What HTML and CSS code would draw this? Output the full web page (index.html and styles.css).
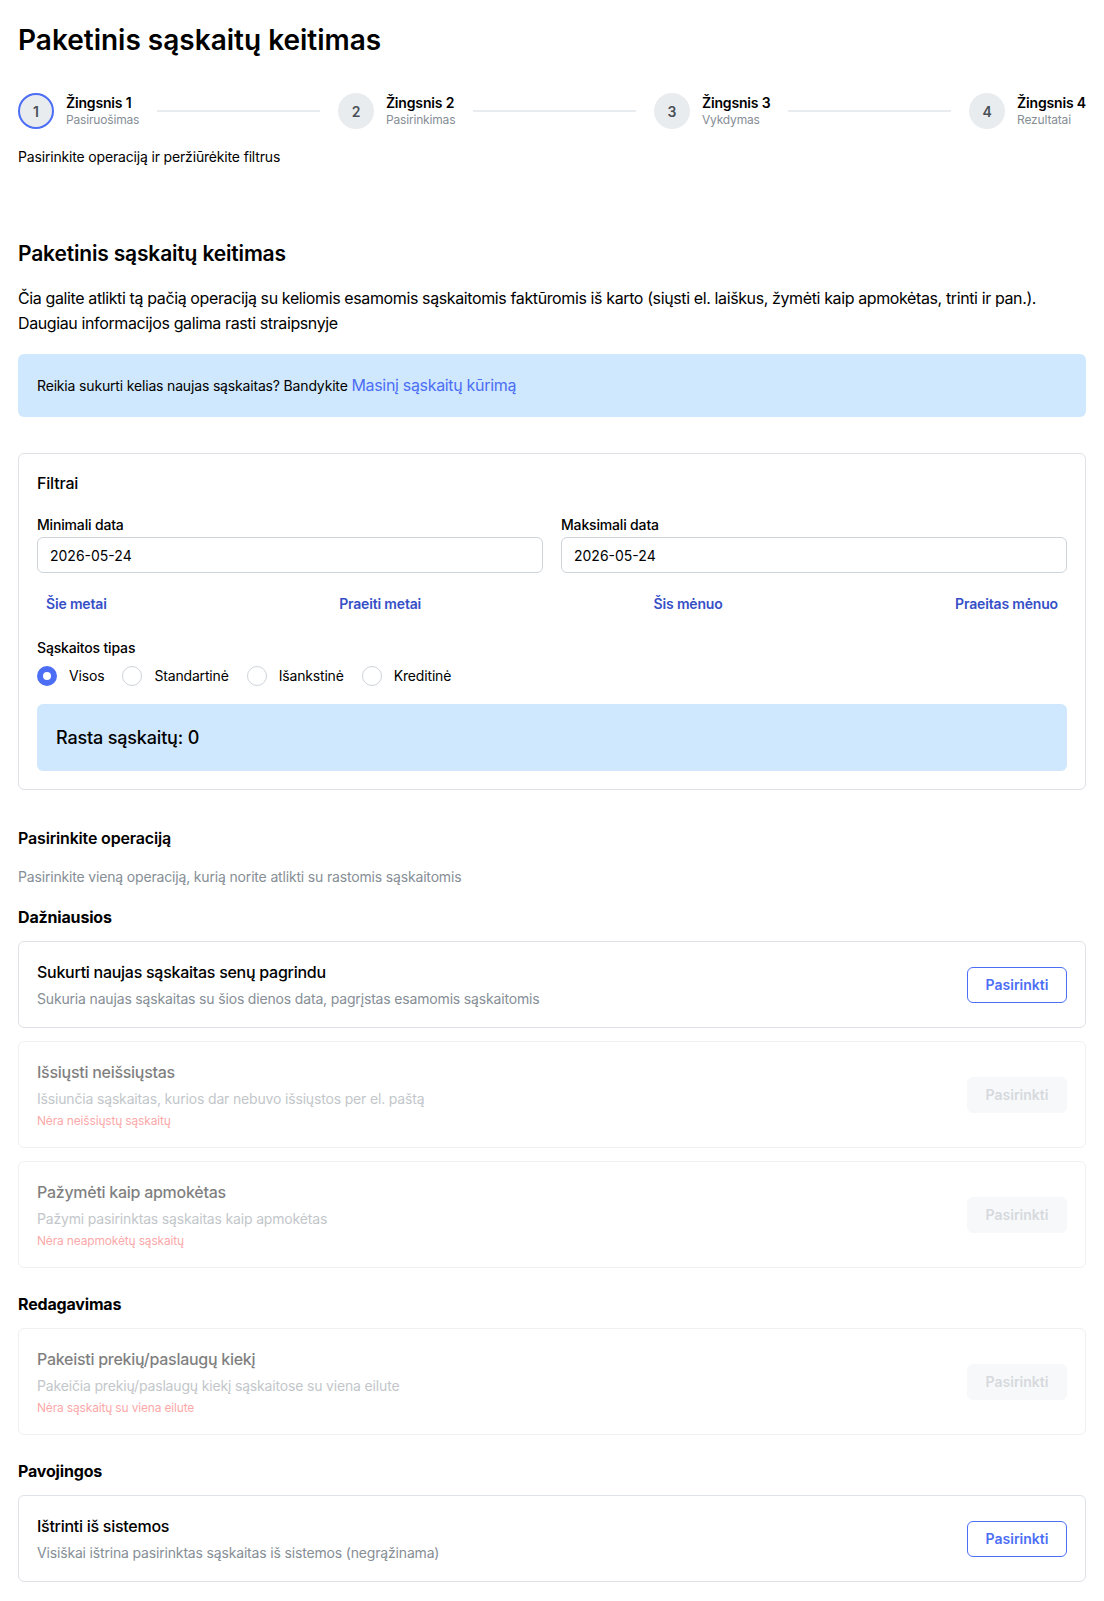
FILE: index.html
```html
<!DOCTYPE html>
<html lang="lt">
<head>
  <meta charset="UTF-8">
  <meta name="viewport" content="width=device-width, initial-scale=1.0">
  <title>Paketinis sąskaitų keitimas</title>
  <link rel="stylesheet" href="styles.css">
</head>
<body>
<div class="page">
  <h1 class="page-title">Paketinis sąskaitų keitimas</h1>

  <div class="stepper">
    <div class="step">
      <div class="step-icon active">1</div>
      <div class="step-body">
        <div class="step-label">Žingsnis 1</div>
        <div class="step-desc">Pasiruošimas</div>
      </div>
    </div>
    <div class="step-line"></div>
    <div class="step">
      <div class="step-icon">2</div>
      <div class="step-body">
        <div class="step-label">Žingsnis 2</div>
        <div class="step-desc">Pasirinkimas</div>
      </div>
    </div>
    <div class="step-line"></div>
    <div class="step">
      <div class="step-icon">3</div>
      <div class="step-body">
        <div class="step-label">Žingsnis 3</div>
        <div class="step-desc">Vykdymas</div>
      </div>
    </div>
    <div class="step-line"></div>
    <div class="step">
      <div class="step-icon">4</div>
      <div class="step-body">
        <div class="step-label">Žingsnis 4</div>
        <div class="step-desc">Rezultatai</div>
      </div>
    </div>
  </div>
  <div class="step-content">Pasirinkite operaciją ir peržiūrėkite filtrus</div>

  <h2 class="section-title">Paketinis sąskaitų keitimas</h2>
  <p class="intro">Čia galite atlikti tą pačią operaciją su keliomis esamomis sąskaitomis faktūromis iš karto (siųsti el. laiškus, žymėti kaip apmokėtas, trinti ir pan.).<br>Daugiau informacijos galima rasti straipsnyje</p>

  <div class="alert">
    Reikia sukurti kelias naujas sąskaitas? Bandykite <a href="#" class="alert-link">Masinį sąskaitų kūrimą</a>
  </div>

  <div class="card filters">
    <div class="card-title">Filtrai</div>
    <div class="date-row">
      <label class="field">
        <span class="field-label">Minimali data</span>
        <input class="input" type="text" value="2026-05-24">
      </label>
      <label class="field">
        <span class="field-label">Maksimali data</span>
        <input class="input" type="text" value="2026-05-24">
      </label>
    </div>
    <div class="quick-links">
      <button class="link-btn">Šie metai</button>
      <button class="link-btn">Praeiti metai</button>
      <button class="link-btn">Šis mėnuo</button>
      <button class="link-btn">Praeitas mėnuo</button>
    </div>
    <div class="field-label">Sąskaitos tipas</div>
    <div class="radio-group">
      <label class="radio"><span class="radio-dot checked"></span>Visos</label>
      <label class="radio"><span class="radio-dot"></span>Standartinė</label>
      <label class="radio"><span class="radio-dot"></span>Išankstinė</label>
      <label class="radio"><span class="radio-dot"></span>Kreditinė</label>
    </div>
    <div class="result">Rasta sąskaitų: 0</div>
  </div>

  <h3 class="ops-title">Pasirinkite operaciją</h3>
  <div class="ops-hint">Pasirinkite vieną operaciją, kurią norite atlikti su rastomis sąskaitomis</div>

  <h4 class="group-title first">Dažniausios</h4>
  <div class="op-list">
    <div class="card op">
      <div class="op-text">
        <div class="op-name">Sukurti naujas sąskaitas senų pagrindu</div>
        <div class="op-desc">Sukuria naujas sąskaitas su šios dienos data, pagrįstas esamomis sąskaitomis</div>
      </div>
      <button class="btn-outline">Pasirinkti</button>
    </div>
    <div class="card op disabled">
      <div class="op-text">
        <div class="op-name">Išsiųsti neišsiųstas</div>
        <div class="op-desc">Išsiunčia sąskaitas, kurios dar nebuvo išsiųstos per el. paštą</div>
        <div class="op-note">Nėra neišsiųstų sąskaitų</div>
      </div>
      <button class="btn-outline" disabled>Pasirinkti</button>
    </div>
    <div class="card op disabled">
      <div class="op-text">
        <div class="op-name">Pažymėti kaip apmokėtas</div>
        <div class="op-desc">Pažymi pasirinktas sąskaitas kaip apmokėtas</div>
        <div class="op-note">Nėra neapmokėtų sąskaitų</div>
      </div>
      <button class="btn-outline" disabled>Pasirinkti</button>
    </div>
  </div>

  <h4 class="group-title">Redagavimas</h4>
  <div class="op-list">
    <div class="card op disabled">
      <div class="op-text">
        <div class="op-name">Pakeisti prekių/paslaugų kiekį</div>
        <div class="op-desc">Pakeičia prekių/paslaugų kiekį sąskaitose su viena eilute</div>
        <div class="op-note">Nėra sąskaitų su viena eilute</div>
      </div>
      <button class="btn-outline" disabled>Pasirinkti</button>
    </div>
  </div>

  <h4 class="group-title">Pavojingos</h4>
  <div class="op-list">
    <div class="card op">
      <div class="op-text">
        <div class="op-name">Ištrinti iš sistemos</div>
        <div class="op-desc">Visiškai ištrina pasirinktas sąskaitas iš sistemos (negrąžinama)</div>
      </div>
      <button class="btn-outline">Pasirinkti</button>
    </div>
  </div>
</div>
</body>
</html>
```

FILE: styles.css
```css
body {
    margin: 0;
    font-family: Inter, "Noto Sans", sans-serif;
    color: #000;
    background: #fff;
    font-size: 14px;
    letter-spacing: -0.012em;
}
.page {
    padding: 18px;
}
.page-title {
    margin: 4px 0 0;
    font-size: 28px;
    font-weight: 600;
    line-height: 36px;
    letter-spacing: 0;
}

/* stepper */
.stepper {
    display: flex;
    align-items: center;
    margin-top: 35px;
}
.step {
    display: flex;
    align-items: center;
}
.step-icon {
    width: 36px;
    height: 36px;
    box-sizing: border-box;
    border-radius: 50%;
    background: #e9ecef;
    color: #495057;
    font-size: 14px;
    font-weight: 600;
    display: flex;
    align-items: center;
    justify-content: center;
}
.step-icon.active {
    border: 2px solid #4c6ef5;
}
.step-body {
    margin-left: 12px;
}
.step-label {
    font-size: 14px;
    font-weight: 600;
    line-height: 18px;
}
.step-desc {
    font-size: 12px;
    color: #868e96;
    line-height: 16px;
}
.step-line {
    flex: 1;
    height: 2px;
    background: #e9ecef;
    margin: 0 18px;
}
.step-content {
    padding-top: 18px;
    line-height: 20px;
}

.section-title {
    margin: 74px 0 0;
    font-size: 21px;
    font-weight: 600;
    line-height: 26px;
}
.intro {
    margin: 19px 0 0;
    font-size: 16px;
    line-height: 25px;
    letter-spacing: -0.024em;
}

.alert {
    margin-top: 18px;
    background: #d0e8fd;
    border-radius: 6px;
    padding: 20px 19px;
    font-size: 14px;
    line-height: 22px;
}
.alert-link {
    color: #4c6ef5;
    font-size: 16px;
    text-decoration: none;
    letter-spacing: -0.02em;
}

.card {
    border: 1px solid #dee2e6;
    border-radius: 6px;
    background: #fff;
}
.filters {
    margin-top: 36px;
    padding: 17px 18px 18px;
}
.card-title {
    font-size: 16px;
    font-weight: 500;
    line-height: 24px;
}
.date-row {
    display: grid;
    grid-template-columns: 1fr 1fr;
    gap: 18px;
    margin-top: 20px;
}
.field {
    display: flex;
    flex-direction: column;
}
.field-label {
    font-size: 14px;
    font-weight: 500;
    line-height: 20px;
    margin-bottom: 2px;
}
.input {
    height: 36px;
    box-sizing: border-box;
    border: 1px solid #ced4da;
    border-radius: 6px;
    padding: 0 12px;
    font-family: inherit;
    font-size: 14px;
    color: #000;
}
.quick-links {
    display: flex;
    justify-content: space-between;
    margin: 12px 0 17px;
}
.link-btn {
    background: none;
    border: 0;
    height: 36px;
    padding: 0 9px;
    font-family: inherit;
    font-size: 14px;
    font-weight: 600;
    color: #364fc7;
    letter-spacing: -0.012em;
}
.radio-group {
    display: flex;
    gap: 18px;
    margin-top: 8px;
}
.radio {
    display: flex;
    align-items: center;
    gap: 12px;
    font-size: 14px;
    line-height: 20px;
}
.radio-dot {
    width: 20px;
    height: 20px;
    box-sizing: border-box;
    border-radius: 50%;
    border: 1px solid #ced4da;
}
.radio-dot.checked {
    border: 6px solid #4c6ef5;
    background: #fff;
}
.result {
    margin-top: 18px;
    background: #d0e8fd;
    border-radius: 6px;
    padding: 21px 19px;
    font-size: 18px;
    font-weight: 500;
    line-height: 25px;
}

.ops-title {
    margin: 36px 0 0;
    font-size: 16px;
    font-weight: 600;
    line-height: 24px;
}
.ops-hint {
    margin-top: 17px;
    color: #868e96;
    line-height: 20px;
}
.group-title {
    margin: 24px 0 12px;
    font-size: 16px;
    font-weight: 700;
    line-height: 24px;
}
.group-title.first {
    margin-top: 18px;
}
.op-list {
    display: flex;
    flex-direction: column;
    gap: 13px;
}
.op {
    display: flex;
    align-items: center;
    justify-content: space-between;
    padding: 18px;
}
.op-name {
    font-size: 16px;
    font-weight: 500;
    line-height: 24px;
    letter-spacing: -0.017em;
}
.op-desc {
    margin-top: 5px;
    color: #868e96;
    line-height: 20px;
}
.op-note {
    margin-top: 4px;
    font-size: 12px;
    color: #fa5252;
    line-height: 16px;
}
.op.disabled {
    opacity: 0.5;
}
.btn-outline {
    width: 100px;
    height: 36px;
    border: 1px solid #4c6ef5;
    border-radius: 6px;
    background: #fff;
    color: #4c6ef5;
    font-family: inherit;
    font-size: 14px;
    font-weight: 600;
}
.btn-outline:disabled {
    border-color: #f1f3f5;
    background: #f1f3f5;
    color: #adb5bd;
}
```
